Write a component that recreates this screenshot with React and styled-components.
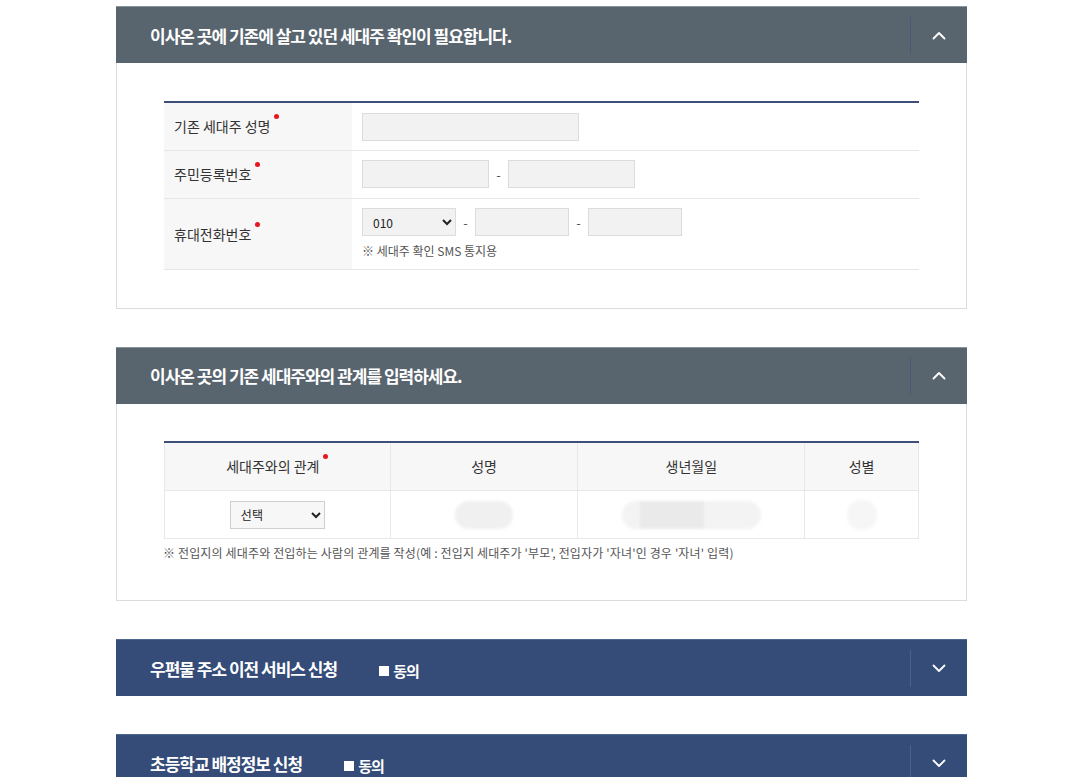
import React from "react";
import styled, { createGlobalStyle } from "styled-components";

const Global = createGlobalStyle`
  html, body { margin: 0; padding: 0; background: #fff; }
  body { font-family: "Noto Sans CJK KR", "Noto Sans", sans-serif; color: #333; }
  * { box-sizing: border-box; }
`;

const Page = styled.div`
  width: 851px;
  margin-left: 116px;
  padding-top: 6px;
  display: flex;
  flex-direction: column;
  gap: 38px;
`;

const Panel = styled.section`
  display: flex;
  flex-direction: column;
`;

const Header = styled.div`
  height: 57px;
  display: flex;
  align-items: center;
  background: ${(p) => (p.$navy ? "#344c77" : "#59656e")};
  border-top: 1px solid ${(p) => (p.$navy ? "#4f6690" : "#8a949b")};
  color: #fff;
`;

const Title = styled.h2`
  margin: 0 0 0 34px;
  font-size: 17px;
  font-weight: 700;
  letter-spacing: -1px;
  line-height: 1;
  flex: 0 0 auto;
`;

const Agree = styled.span`
  margin-left: 42px;
  margin-top: 5px;
  font-size: 15px;
  font-weight: 700;
  letter-spacing: -1px;
  display: inline-flex;
  align-items: center;
  gap: 2px;
`;

const Box = styled.span`
  display: inline-block;
  width: 10px;
  height: 10px;
  background: #fff;
  margin-right: 2px;
`;

const Toggle = styled.div`
  margin-left: auto;
  width: 57px;
  height: 37px;
  border-left: 1px solid ${(p) => (p.$navy ? "#4a6189" : "#4b5a74")};
  display: flex;
  align-items: center;
  justify-content: center;
`;

const Body = styled.div`
  border: 1px solid #dcdcdc;
  border-top: none;
  padding: ${(p) => p.$pad || "38px 47px 38px"};
`;

const FormTable = styled.table`
  width: 100%;
  border-collapse: collapse;
  border-top: 2px solid #3d4f78;
`;

const Row = styled.tr`
  height: ${(p) => p.$h || 48}px;
  border-bottom: 1px solid #e6e6e6;
`;

const Label = styled.th`
  width: 188px;
  background: #f7f7f7;
  text-align: left;
  padding: 0 10px;
  font-size: 14px;
  font-weight: 400;
  letter-spacing: 0;
  color: #333;
  vertical-align: middle;
`;

const Req = styled.span`
  display: inline-block;
  width: 5px;
  height: 5px;
  border-radius: 50%;
  background: #e8161d;
  vertical-align: top;
  margin-left: 4px;
  margin-top: -2px;
`;

const Cell = styled.td`
  padding: 0 10px;
  vertical-align: middle;
`;

const Line = styled.div`
  display: flex;
  align-items: center;
  gap: 7px;
`;

const Input = styled.input`
  width: ${(p) => p.$w}px;
  height: 28px;
  border: 1px solid #dcdcdc;
  background: #f2f2f2;
  padding: 0 6px;
  font-size: 13px;
  outline: none;
`;

const Dash = styled.span`
  font-size: 13px;
  color: #555;
  width: 5px;
  text-align: center;
`;

const Select = styled.select`
  width: ${(p) => p.$w}px;
  height: 28px;
  border: 1px solid ${(p) => p.$b || "#dcdcdc"};
  background-color: ${(p) => p.$bg || "#f2f2f2"};
  font-family: "Noto Sans CJK KR", "Noto Sans", sans-serif;
  font-size: 12px;
  color: #222;
  padding: 0 6px;
  border-radius: 0;
`;

const Note = styled.p`
  margin: ${(p) => p.$m || "6px 0 0"};
  font-size: 12px;
  color: #555;
  letter-spacing: ${(p) => p.$ls || 0}px;
  line-height: 16px;
`;

const GridTable = styled.table`
  width: 100%;
  border-collapse: collapse;
  border-top: 2px solid #3d4f78;
`;

const HeadCell = styled.th`
  width: ${(p) => p.$w}px;
  height: 49px;
  background: #f7f7f7;
  font-size: 14px;
  font-weight: 400;
  color: #333;
  border-left: 1px solid #e8e8e8;
  border-right: 1px solid #e8e8e8;
  text-align: center;
  vertical-align: middle;
`;

const DataCell = styled.td`
  height: 48px;
  border: 1px solid #e8e8e8;
  text-align: center;
  vertical-align: middle;
`;

const Blur = styled.div`
  display: inline-block;
  width: ${(p) => p.$w}px;
  height: ${(p) => p.$h || 28}px;
  border-radius: 14px;
  background: ${(p) => p.$c || "#f0f0f0"};
  filter: blur(1.5px);
  vertical-align: middle;
`;

const BlurWide = styled.div`
  display: inline-flex;
  width: 139px;
  height: 28px;
  border-radius: 14px;
  background: #f3f3f3;
  filter: blur(1.5px);
  padding-left: 18px;
  vertical-align: middle;
`;

const BlurInner = styled.div`
  width: 64px;
  height: 28px;
  background: #eaeaea;
`;

const Chevron = ({ up }) => (
  <svg width="14" height="9" viewBox="0 0 14 9" fill="none">
    <polyline
      points={up ? "1.5,7.5 7,2 12.5,7.5" : "1.5,1.5 7,7 12.5,1.5"}
      stroke="#fff"
      strokeWidth="1.8"
      strokeLinecap="round"
      strokeLinejoin="round"
    />
  </svg>
);

function PanelHeader({ title, navy, open, agree }) {
  return (
    <Header $navy={navy}>
      <Title>{title}</Title>
      {agree && (
        <Agree>
          <Box />
          동의
        </Agree>
      )}
      <Toggle $navy={navy}>
        <Chevron up={open} />
      </Toggle>
    </Header>
  );
}

export default function App() {
  return (
    <>
      <Global />
      <Page>
        <Panel>
          <PanelHeader title="이사온 곳에 기존에 살고 있던 세대주 확인이 필요합니다." open />
          <Body>
            <FormTable>
              <tbody>
                <Row>
                  <Label>
                    기존 세대주 성명<Req />
                  </Label>
                  <Cell>
                    <Input $w={217} />
                  </Cell>
                </Row>
                <Row>
                  <Label>
                    주민등록번호<Req />
                  </Label>
                  <Cell>
                    <Line>
                      <Input $w={127} />
                      <Dash>-</Dash>
                      <Input $w={127} />
                    </Line>
                  </Cell>
                </Row>
                <Row $h={71}>
                  <Label>
                    휴대전화번호<Req />
                  </Label>
                  <Cell>
                    <Line>
                      <Select $w={94} defaultValue="010">
                        <option>010</option>
                        <option>011</option>
                        <option>016</option>
                      </Select>
                      <Dash>-</Dash>
                      <Input $w={94} />
                      <Dash>-</Dash>
                      <Input $w={94} />
                    </Line>
                    <Note $m="7px 0 0">※ 세대주 확인 SMS 통지용</Note>
                  </Cell>
                </Row>
              </tbody>
            </FormTable>
          </Body>
        </Panel>

        <Panel>
          <PanelHeader title="이사온 곳의 기존 세대주와의 관계를 입력하세요." open />
          <Body $pad="37px 47px 39px">
            <GridTable>
              <thead>
                <tr>
                  <HeadCell $w={226}>
                    세대주와의 관계<Req />
                  </HeadCell>
                  <HeadCell $w={188}>성명</HeadCell>
                  <HeadCell $w={227}>생년월일</HeadCell>
                  <HeadCell $w={114}>성별</HeadCell>
                </tr>
              </thead>
              <tbody>
                <tr>
                  <DataCell>
                    <Select $w={95} $bg="#f7f7f7" $b="#cfcfcf" defaultValue="선택">
                      <option>선택</option>
                      <option>부모</option>
                      <option>자녀</option>
                    </Select>
                  </DataCell>
                  <DataCell>
                    <Blur $w={58} />
                  </DataCell>
                  <DataCell>
                    <BlurWide>
                      <BlurInner />
                    </BlurWide>
                  </DataCell>
                  <DataCell>
                    <Blur $w={30} $h={30} $c="#f6f6f6" />
                  </DataCell>
                </tr>
              </tbody>
            </GridTable>
            <Note $m="6px 0 0 -1px" $ls={0.15}>
              ※ 전입지의 세대주와 전입하는 사람의 관계를 작성(예 : 전입지 세대주가 '부모', 전입자가 '자녀'인 경우 '자녀' 입력)
            </Note>
          </Body>
        </Panel>

        <Panel>
          <PanelHeader title="우편물 주소 이전 서비스 신청" navy agree />
        </Panel>

        <Panel>
          <PanelHeader title="초등학교 배정정보 신청" navy agree />
        </Panel>
      </Page>
    </>
  );
}
